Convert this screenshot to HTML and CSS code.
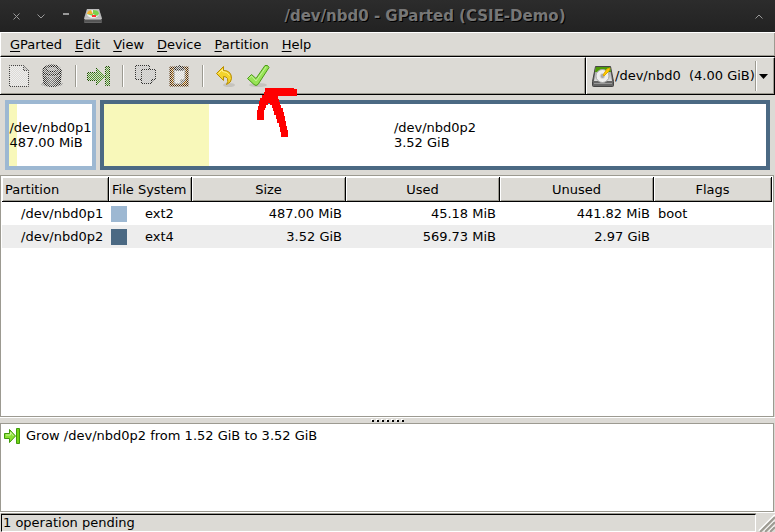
FILE: index.html
```html
<!DOCTYPE html>
<html lang="en">
<head>
<meta charset="utf-8">
<title>/dev/nbd0 - GParted (CSIE-Demo)</title>
<link rel="stylesheet" href="styles.css">
</head>
<body>
<svg class="defs" aria-hidden="true">
  <defs>
    <pattern id="stipple" width="2" height="2" patternUnits="userSpaceOnUse"><path d="M0 0h1v1H0zM1 1h1v1H1z" fill="#dcdad5"/></pattern>
    <linearGradient id="steel" x1="0" x2="1" y1="0" y2="0"><stop offset="0" stop-color="#222"/><stop offset=".45" stop-color="#888"/><stop offset="1" stop-color="#222"/></linearGradient>
    <linearGradient id="case" x1="0" x2="0" y1="0" y2="1"><stop offset="0" stop-color="#999"/><stop offset="1" stop-color="#ddd"/></linearGradient>
  </defs>
</svg>
<header class="titlebar">
  <button class="wm" aria-label="Close"><svg width="7" height="7"><path d="M.5.5l6 6M6.500.5l-6 6"/></svg></button>
  <button class="wm" aria-label="Roll up"><svg width="8" height="5"><path d="M.5.5L4 4l3.500-3.500"/></svg></button>
  <button class="wm" aria-label="Minimize"><svg width="6" height="6"><path d="M0 1h6" stroke-width="2"/></svg></button>
  <svg class="app-icon" width="20" height="16" viewBox="0 0 20 16"><path d="M4 1h12l3 9v4q0 1-1 1H2q-1 0-1-1v-4z" fill="#666"/><path d="M4 1h12l3 10H1z" fill="#bbb"/><path d="M1 11h18v3H1z" fill="#555"/><path d="M2 11h16" stroke="#ccc"/><ellipse cx="10" cy="6" rx="6" ry="4" fill="#eee"/><path d="M10 6V2q6 0 6 4l-2 2z" fill="#7bd04e"/><path d="M10 6L4 6q0-3 4-4z" fill="#f0b030"/><path d="M4 6h6v2z" fill="#7bd04e"/><path d="M9 7h4v2H9z" fill="#f33"/></svg>
  <h1>/dev/nbd0 - GParted (CSIE-Demo)</h1>
  <button class="wm" aria-label="Maximize"><svg width="8" height="5"><path d="M.5 4.500L4 1l3.500 3.500"/></svg></button>
</header>
<nav class="menubar">
  <button><u>G</u>Parted</button><button><u>E</u>dit</button><button><u>V</u>iew</button><button><u>D</u>evice</button><button><u>P</u>artition</button><button><u>H</u>elp</button>
</nav>
<div class="toolbar-row">
  <div class="toolbar">
    <button disabled aria-label="New"><svg width="24" height="24"><path d="M2.500 1.500h14l5 5v16h-19z" fill="#eee" stroke="#444"/><path d="M16.500 1.500v5h5" fill="#bbb" stroke="#444"/><path d="M2 1h15l5 5v17H2z" fill="url(#stipple)"/></svg></button>
    <button disabled aria-label="Delete"><svg width="24" height="24"><ellipse cx="12" cy="20" rx="11" ry="3" fill="#999"/><path d="M3 6h18v5l-1 9q-8 5-16 0L3 11z" fill="url(#steel)" stroke="#222"/><ellipse cx="12" cy="6" rx="9" ry="5" fill="#777" stroke="#111"/><ellipse cx="12" cy="5" rx="6" ry="2.500" fill="#aaa" stroke="#111"/><path d="M4 11q8 4 16 0" fill="none" stroke="#aaa"/><path d="M0 0h24v24H0z" fill="url(#stipple)"/></svg></button>
    <span class="sep"></span>
    <button disabled aria-label="Resize/Move"><svg width="24" height="24"><path d="M.5 8.500h9v-5l9 9-9 9v-5h-9zM18.500 2.500h4v19h-4z" fill="#4f962a" stroke="#1c5000"/><path d="M0 0h24v24H0z" fill="url(#stipple)"/></svg></button>
    <span class="sep"></span>
    <button disabled aria-label="Copy"><svg width="24" height="24"><path d="M1.500 1.500h14v11l-3 3h-11z" fill="#ccc" stroke="#333"/><path d="M7.500 5.500h14v10l-4 4h-10z" fill="#ccc" stroke="#333"/><path d="M17.500 19.500v-4h4" fill="#999" stroke="#333"/><path d="M0 0h24v24H0z" fill="url(#stipple)"/></svg></button>
    <button disabled aria-label="Paste"><svg width="24" height="24"><path d="M3.500 3.500h17v18h-17z" fill="#9a5800" stroke="#502800" stroke-width="2"/><path d="M7 5h11v11l-4 4H7z" fill="#eee" stroke="#666"/><path d="M8 6V3h2q2-3 4 0h2v3z" fill="#666" stroke="#111"/><path d="M14 20v-4h4" fill="#999" stroke="#666"/><path d="M0 0h24v24H0z" fill="url(#stipple)"/></svg></button>
    <span class="sep"></span>
    <button aria-label="Undo"><svg width="24" height="24"><ellipse cx="15" cy="21" rx="6" ry="2" fill="#c5c3be"/><path d="M2.500 9.500l7-7v4q8 0 8 8 0 4-5 6 2-3 1-6-1-2-4-2v4z" fill="#f3d32c" stroke="#b88c00" stroke-linejoin="round"/><path d="M4.500 9.500l4-4v2q5 0 7 4" fill="none" stroke="#fff08a"/></svg></button>
    <button class="apply" aria-label="Apply"><svg width="26" height="24"><ellipse cx="11" cy="21" rx="9" ry="2" fill="#c5c3be"/><path d="M.5 14.500l4-4 4.500 4L18 1.500q3-1 4 2l-11 17q-2 2-4 0z" fill="#97e455" stroke="#4c9a18" stroke-linejoin="round"/><path d="M2.500 14l2-2 4.500 5L19 3" fill="none" stroke="#c5f29a"/></svg>
      <svg class="mark" width="44" height="52" viewBox="256 86 44 52" aria-hidden="true"><path d="M265 88h29v1h3v7h-19v3h1v3h1v3h1v3h2v4h1v4h1v5h1v5h1v4h1v7h-7v-5h-1v-5h-1v-4h-2v-4h-1v-4h-2v-4h-1v-3h-1v-3h-2v-2h-2v2h-2v3h-1v2h-1v10h-7v-10h1v-4h1v-5h1v-3h2v-3h2v-3h1z" fill="red"/></svg></button>
  </div>
  <label class="device">
    <svg width="22" height="22"><path d="M3.500 1.500h15l3 15v4q0 1-1 1h-19q-1 0-1-1v-4z" fill="#666" stroke="#444"/><path d="M4 2h14l2 14H2z" fill="url(#case)"/><path d="M4 2h14l1 5H3z" fill="#4e9a06"/><circle cx="10.500" cy="11" r="6.500" fill="#eee" stroke="#aaa"/><circle cx="10.500" cy="11" r="2.500" fill="#aaa" stroke="#ddd"/><path d="M11 10l4-6 3-1-1 3-5 5z" fill="#fc0" stroke="#e0a800"/><path d="M2 18.500h18" stroke="#999"/></svg>
    <select aria-label="Device"><option>/dev/nbd0&nbsp; (4.00 GiB)</option></select>
    <span class="drop"><svg width="9" height="5"><path d="M0 0h9L4.500 5z"/></svg></span>
  </label>
</div>
<main>
  <section class="disk">
    <div class="part p1"><span class="used" style="width:9.640%"></span><p>/dev/nbd0p1<br>487.00 MiB</p></div>
    <div class="part p2"><span class="used" style="width:15.900%"></span><p>/dev/nbd0p2<br>3.52 GiB</p></div>
  </section>
  <section class="list">
    <table>
      <colgroup><col class="c-name"><col class="c-fs"><col class="c-size"><col class="c-size"><col class="c-size"><col></colgroup>
      <thead><tr><th class="start">Partition</th><th class="start">File System</th><th>Size</th><th>Used</th><th>Unused</th><th>Flags</th></tr></thead>
      <tbody>
        <tr><td class="name">/dev/nbd0p1</td><td><span class="fs"><i class="swatch ext2"></i>ext2</span></td><td class="num">487.00 MiB</td><td class="num">45.18 MiB</td><td class="num">441.82 MiB</td><td>boot</td></tr>
        <tr><td class="name">/dev/nbd0p2</td><td><span class="fs"><i class="swatch ext4"></i>ext4</span></td><td class="num">3.52 GiB</td><td class="num">569.73 MiB</td><td class="num">2.97 GiB</td><td></td></tr>
      </tbody>
    </table>
  </section>
  <div class="splitter"><i></i><i></i><i></i><i></i><i></i><i></i><i></i></div>
  <section class="pending">
    <svg width="16" height="16"><path d="M.5 5.500h5v-4l6 6.500-6 6.500v-4h-5z" fill="#8ae234" stroke="#3f9a0c"/><path d="M2 7h4.500V4l3 4" fill="none" stroke="#caf59b"/><path d="M12.500.5h3v15h-3z" fill="#73d216" stroke="#3f9a0c"/></svg>
    <span>Grow /dev/nbd0p2 from 1.52 GiB to 3.52 GiB</span>
  </section>
</main>
<footer>
  <div class="status">1 operation pending</div>
  <svg width="17" height="18"><path d="M1 17L17 1M6 18L17 7M11 18l6-6" stroke="#fff" stroke-width="2"/><path d="M2 18L17 3M7 18L17 8M12 18l5-5" stroke="#9c9a91" stroke-width="2"/></svg>
</footer>
</body>
</html>
```
FILE: styles.css
```css
* { box-sizing: border-box; }
body {
  margin: 0;
  min-height: 100vh;
  display: flex;
  flex-direction: column;
  background: #dcdad5;
  color: #000;
  font: 13px/15px "DejaVu Sans", sans-serif;
}
button, select { font: inherit; color: inherit; border: 0; padding: 0; background: none; }
svg { display: block; flex: none; }
.defs { position: absolute; width: 0; height: 0; }

.titlebar {
  height: 32px;
  display: flex;
  align-items: center;
  padding: 0 12px;
  background: linear-gradient(#2c2c2c, #222);
}
.wm { width: 8px; height: 8px; display: grid; place-items: center; margin-right: 17px; }
.wm:last-child { margin-right: 0; }
.wm path { fill: none; stroke: #999; }
.app-icon { margin-left: -4px; }
h1 {
  flex: 1;
  margin: 0;
  padding-right: 8px;
  text-align: center;
  font-size: 15px;
  line-height: 20px;
  color: #777;
  text-shadow: 1px 1px #000;
}

.menubar {
  height: 25px;
  display: flex;
  align-items: center;
  gap: 13px;
  padding: 0 9px;
  border-top: 1px solid #fff;
  border-left: 1px solid #fff;
  border-bottom: 1px solid #000;
  box-shadow: inset -1px -1px #9c9a91;
}
u { text-underline-offset: 2px; }

.toolbar-row { display: flex; height: 38px; border-bottom: 1px solid #000; }
.toolbar, .device {
  display: flex;
  align-items: center;
  border-top: 1px solid #fff;
  border-left: 1px solid #fff;
  border-right: 1px solid #000;
  box-shadow: inset -1px -1px #9c9a91;
}
.toolbar { flex: 1; padding-left: 6px; }
.toolbar button { width: 24px; height: 24px; margin-right: 9px; }
.toolbar .apply { position: relative; width: 26px; }
.mark { position: absolute; left: 9px; top: 22px; z-index: 1; }
.sep {
  width: 2px;
  height: 22px;
  margin: 0 10px 0 2px;
  border-left: 1px solid #9c9a91;
  border-right: 1px solid #fff;
}
.device { width: 189px; padding-left: 5px; }
.device select { appearance: none; flex: 1; padding-left: 1px; line-height: 18px; }
.drop {
  height: 30px;
  display: flex;
  align-items: center;
  padding: 0 8px 0 3px;
  border-left: 1px solid #9c9a91;
  box-shadow: inset 1px 0 #fff;
  pointer-events: none;
}

main { flex: 1; display: flex; flex-direction: column; }
.disk { display: flex; gap: 4px; padding: 5px; height: 80px; }
.part {
  position: relative;
  display: grid;
  place-items: center;
  border: 4px solid #4b6983;
  background: #fff;
}
.part p { position: relative; margin: 0; white-space: nowrap; }
.p1 { width: 91px; border-color: #9db8d2; }
.p2 { flex: 1; }
.used { position: absolute; top: 0; bottom: 0; left: 0; background: #f8f8ba; }

.list, .pending { margin-right: 1px; background: #fff; border: 1px solid #9c9a91; }
.list { flex: 1; padding: 1px; }
table { width: 100%; table-layout: fixed; border-collapse: separate; border-spacing: 0; }
.c-name { width: 107px; }
.c-fs { width: 83px; }
.c-size { width: 154px; }
th {
  height: 25px;
  padding: 0 3px;
  font-weight: normal;
  text-align: center;
  white-space: nowrap;
  background: #dcdad5;
  border-right: 1px solid #000;
  border-bottom: 1px solid #000;
  box-shadow: inset 1px 1px #fff, inset -1px -1px #9c9a91;
}
th.start { text-align: left; }
td { height: 23px; padding: 0 4px; white-space: nowrap; }
td.name { padding-left: 19px; }
td.num { text-align: right; }
tbody tr:nth-child(even) { background: #ededed; }
.fs { display: flex; align-items: center; gap: 18px; margin-left: -2px; }
.swatch { width: 16px; height: 16px; }
.ext2 { background: #9db8d2; }
.ext4 { background: #4b6983; }

.splitter {
  height: 6px;
  display: flex;
  justify-content: center;
  align-items: center;
  gap: 3px;
  border-top: 1px solid #fff;
}
.splitter i { width: 2px; height: 2px; background: #000; box-shadow: -1px -1px #fff; }
.pending { height: 89px; display: flex; gap: 6px; padding: 4px 3px; }

footer { display: flex; height: 20px; padding-top: 1px; border-top: 1px solid #fff; }
.status {
  flex: 1;
  margin: 0 2px 0 1px;
  padding-left: 1px;
  line-height: 16px;
  border: 1px solid #fff;
  border-top-color: #000;
  border-left-color: #000;
  box-shadow: 0 -1px #9c9a91;
}
```
